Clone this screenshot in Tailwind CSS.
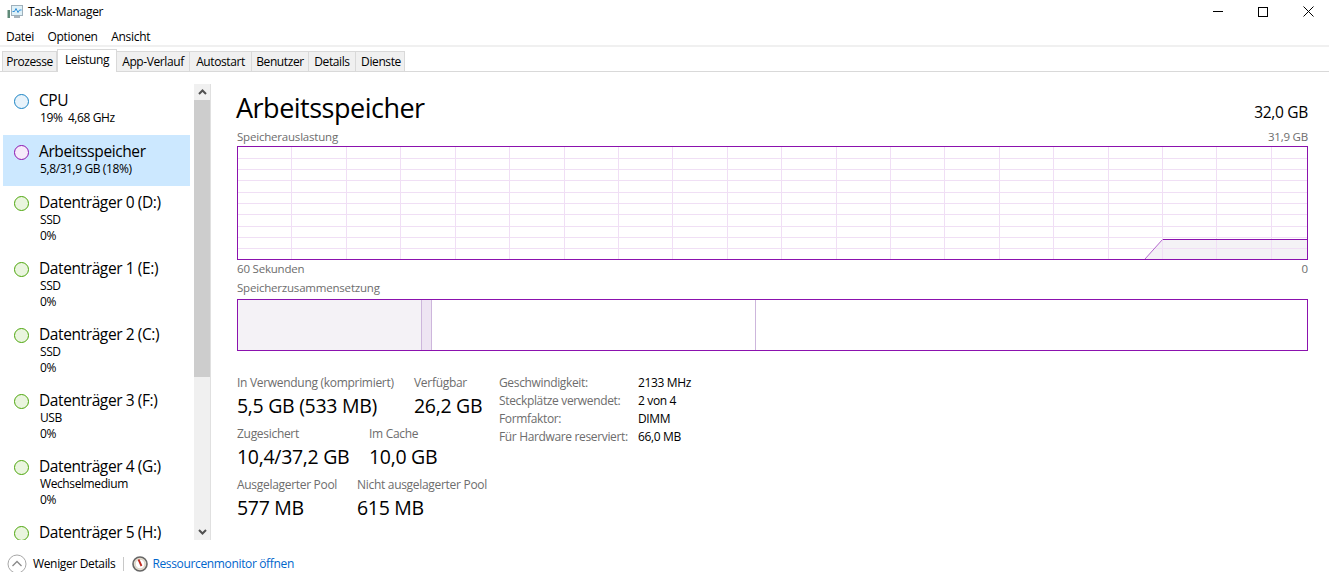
<!DOCTYPE html>
<html lang="de">
  <head>
    <meta charset="UTF-8" />
    <title>Task-Manager</title>
    <script src="https://cdn.jsdelivr.net/npm/@tailwindcss/browser@4"></script>
  </head>
  <body class="bg-white text-black font-['Open_Sans',sans-serif] text-[12px] tracking-[-0.3px] h-[572px] w-[1329px] overflow-hidden">
    <!-- title bar -->
    <div class="flex items-center h-[23px] pl-[7px]">
      <svg class="w-4 h-4 mr-[5px]" viewBox="0 0 16 16">
        <rect x="0.5" y="6" width="2.500" height="8" fill="#5f8a78" />
        <rect x="4.500" y="1.500" width="11" height="10" fill="#dff1f8" stroke="#9fb0bb" />
        <path d="M5.500 7.500 L7.500 7.500 L9 4.500 L11 8.500 L12.500 6 L14.500 6" fill="none" stroke="#2f8fd8" />
        <rect x="7" y="12" width="6" height="2" fill="#a9b4bb" />
      </svg>
      <span>Task-Manager</span>
      <div class="ml-auto flex items-center pr-[15px] gap-[35px]">
        <div class="w-[10px] h-px bg-black"></div>
        <div class="w-[10px] h-[10px] border border-black"></div>
        <svg class="w-[11px] h-[11px]" viewBox="0 0 11 11"><path d="M0.5 0.5 L10.5 10.5 M10.5 0.5 L0.5 10.5" stroke="#000" /></svg>
      </div>
    </div>
    <!-- menu -->
    <div class="flex items-center gap-[13.5px] h-[24px] pt-[5px] pl-[6px] border-b-2 border-[#f0f0f0]">
      <span>Datei</span><span>Optionen</span><span>Ansicht</span>
    </div>
    <!-- tabs -->
    <div class="flex items-end h-[25px] border-b border-[#d9d9d9] pl-[2px] tracking-[-0.4px]">
      <div class="w-[55px] h-[21px] -mb-px flex items-center justify-center bg-[#f0f0f0] border border-[#d9d9d9]">Prozesse</div>
      <div class="w-[60px] h-[23px] -mb-px flex items-start pt-[1px] justify-center bg-white border border-b-0 border-[#d9d9d9]">Leistung</div>
      <div class="w-[73px] h-[21px] -mb-px flex items-center justify-center bg-[#f0f0f0] border border-l-0 border-[#d9d9d9]">App-Verlauf</div>
      <div class="w-[62px] h-[21px] -mb-px flex items-center justify-center bg-[#f0f0f0] border border-l-0 border-[#d9d9d9]">Autostart</div>
      <div class="w-[57px] h-[21px] -mb-px flex items-center justify-center bg-[#f0f0f0] border border-l-0 border-[#d9d9d9]">Benutzer</div>
      <div class="w-[47px] h-[21px] -mb-px flex items-center justify-center bg-[#f0f0f0] border border-l-0 border-[#d9d9d9]">Details</div>
      <div class="w-[49px] h-[21px] -mb-px flex items-center justify-center bg-[#f0f0f0] border border-l-0 border-[#d9d9d9] pl-[2px]">Dienste</div>
    </div>

    <div class="flex h-[468px]">
      <!-- left list -->
      <div class="flex w-[211px] shrink-0 pt-[12px]">
        <div class="w-[187px] ml-[3px] h-[456px] overflow-hidden shrink-0 tracking-[-0.4px]">
          <div class="h-[51px] flex pl-[11px] pt-[7px]">
            <div class="w-[15px] h-[15px] mt-[3px] rounded-full border border-[#1a83c4] bg-[#e8f3fb]"></div>
            <div class="ml-[10px]">
              <div class="text-[15.5px] leading-[19px]">CPU</div>
              <div class="leading-[16px] pl-px">19%&nbsp; 4,68 GHz</div>
            </div>
          </div>
          <div class="h-[51px] flex pl-[11px] pt-[7px] bg-[#cce8ff]">
            <div class="w-[15px] h-[15px] mt-[3px] rounded-full border border-[#8b12ae] bg-[#f6eafa]"></div>
            <div class="ml-[10px]">
              <div class="text-[15.5px] leading-[19px]">Arbeitsspeicher</div>
              <div class="leading-[16px] pl-px">5,8/31,9 GB (18%)</div>
            </div>
          </div>
          <div class="h-[66px] flex pl-[11px] pt-[7px]">
            <div class="w-[15px] h-[15px] mt-[3px] rounded-full border border-[#4da60c] bg-[#eaf5df]"></div>
            <div class="ml-[10px]">
              <div class="text-[15.5px] leading-[19px]">Datenträger 0 (D:)</div>
              <div class="leading-[16px] pl-px">SSD</div>
              <div class="leading-[16px] pl-px">0%</div>
            </div>
          </div>
          <div class="h-[66px] flex pl-[11px] pt-[7px]">
            <div class="w-[15px] h-[15px] mt-[3px] rounded-full border border-[#4da60c] bg-[#eaf5df]"></div>
            <div class="ml-[10px]">
              <div class="text-[15.5px] leading-[19px]">Datenträger 1 (E:)</div>
              <div class="leading-[16px] pl-px">SSD</div>
              <div class="leading-[16px] pl-px">0%</div>
            </div>
          </div>
          <div class="h-[66px] flex pl-[11px] pt-[7px]">
            <div class="w-[15px] h-[15px] mt-[3px] rounded-full border border-[#4da60c] bg-[#eaf5df]"></div>
            <div class="ml-[10px]">
              <div class="text-[15.5px] leading-[19px]">Datenträger 2 (C:)</div>
              <div class="leading-[16px] pl-px">SSD</div>
              <div class="leading-[16px] pl-px">0%</div>
            </div>
          </div>
          <div class="h-[66px] flex pl-[11px] pt-[7px]">
            <div class="w-[15px] h-[15px] mt-[3px] rounded-full border border-[#4da60c] bg-[#eaf5df]"></div>
            <div class="ml-[10px]">
              <div class="text-[15.5px] leading-[19px]">Datenträger 3 (F:)</div>
              <div class="leading-[16px] pl-px">USB</div>
              <div class="leading-[16px] pl-px">0%</div>
            </div>
          </div>
          <div class="h-[66px] flex pl-[11px] pt-[7px]">
            <div class="w-[15px] h-[15px] mt-[3px] rounded-full border border-[#4da60c] bg-[#eaf5df]"></div>
            <div class="ml-[10px]">
              <div class="text-[15.5px] leading-[19px]">Datenträger 4 (G:)</div>
              <div class="leading-[16px] pl-px">Wechselmedium</div>
              <div class="leading-[16px] pl-px">0%</div>
            </div>
          </div>
          <div class="h-[66px] flex pl-[11px] pt-[7px]">
            <div class="w-[15px] h-[15px] mt-[3px] rounded-full border border-[#4da60c] bg-[#eaf5df]"></div>
            <div class="ml-[10px]">
              <div class="text-[15.5px] leading-[19px]">Datenträger 5 (H:)</div>
            </div>
          </div>
        </div>
        <!-- scrollbar -->
        <div class="w-[17px] ml-[4px] h-[456px] bg-[#f0f0f0] flex flex-col border-r border-[#e0e0e0]">
          <div class="h-[16px] flex items-center justify-center">
            <svg class="w-[9px] h-[6px]" viewBox="0 0 9 6"><path d="M1 5 L4.500 1.500 L8 5" fill="none" stroke="#505050" stroke-width="2" /></svg>
          </div>
          <div class="h-[277px] bg-[#cdcdcd]"></div>
          <div class="flex-1"></div>
          <div class="h-[16px] flex items-center justify-center">
            <svg class="w-[9px] h-[6px]" viewBox="0 0 9 6"><path d="M1 1 L4.500 4.500 L8 1" fill="none" stroke="#505050" stroke-width="2" /></svg>
          </div>
        </div>
      </div>

      <!-- main -->
      <div class="flex-1 pl-[26px] pr-[21px]">
        <div class="flex items-end justify-between h-[50px] pt-[8px]">
          <div class="text-[27px] leading-[34px] -ml-px tracking-[-0.5px] relative top-[3px]">Arbeitsspeicher</div>
          <div class="text-[15.5px] leading-[20px]">32,0 GB</div>
        </div>
        <div class="flex justify-between text-[#6d6d6d] text-[11.5px] tracking-[-0.2px] leading-[16px] mt-[7px]">
          <span>Speicherauslastung</span><span>31,9 GB</span>
        </div>
        <svg class="block mt-[1px] w-[1071px] h-[114px]" viewBox="0 0 1071 114" shape-rendering="crispEdges">
          <path d="M908 113 L925.500 93.500 H1071 V113 Z" fill="#f4f2f6" />
          <g stroke="#f0dff5">
            <path d="M0 12.500H1071M0 23.500H1071M0 34.500H1071M0 46.500H1071M0 57.500H1071M0 68.500H1071M0 80.500H1071M0 91.500H1071M0 102.500H1071" />
            <path d="M54.500 0V114M109.500 0V114M163.500 0V114M218.500 0V114M272.500 0V114M327.500 0V114M381.500 0V114M435.500 0V114M490.500 0V114M544.500 0V114M599.500 0V114M653.500 0V114M707.500 0V114M762.500 0V114M816.500 0V114M871.500 0V114M925.500 0V114M979.500 0V114M1034.500 0V114" />
          </g>
          <path d="M908 113 L925.500 93.500" stroke="#b568cf" fill="none" shape-rendering="auto" />
          <path d="M925.500 93.500 H1071" stroke="#8b12ae" />
          <rect x="0.500" y="0.500" width="1070" height="113" fill="none" stroke="#8b12ae" />
        </svg>
        <div class="flex justify-between text-[#6d6d6d] text-[11.5px] tracking-[-0.2px] leading-[16px] mt-px">
          <span>60 Sekunden</span><span>0</span>
        </div>
        <div class="text-[#6d6d6d] text-[11.5px] tracking-[-0.2px] leading-[16px] mt-[3px]">Speicherzusammensetzung</div>
        <div class="flex mt-[3px] w-[1071px] h-[52px] border border-[#8b12ae]">
          <div class="w-[184px] bg-[#f4f2f6] border-r border-[#cdb6dc]"></div>
          <div class="w-[10px] bg-[#eee5f3] border-r border-[#cdb6dc]"></div>
          <div class="w-[324px] border-r border-[#cdb6dc]"></div>
        </div>

        <!-- stats -->
        <div class="flex mt-[24px]">
          <div class="w-[262px] shrink-0">
            <div class="flex h-[51px]">
              <div class="w-[177px]">
                <div class="text-[#6d6d6d] leading-[16px]">In Verwendung (komprimiert)</div>
                <div class="text-[19.5px] leading-[29px]">5,5 GB (533 MB)</div>
              </div>
              <div>
                <div class="text-[#6d6d6d] leading-[16px]">Verfügbar</div>
                <div class="text-[19.5px] leading-[29px]">26,2 GB</div>
              </div>
            </div>
            <div class="flex h-[51px]">
              <div class="w-[132px]">
                <div class="text-[#6d6d6d] leading-[16px]">Zugesichert</div>
                <div class="text-[19.5px] leading-[29px]">10,4/37,2 GB</div>
              </div>
              <div>
                <div class="text-[#6d6d6d] leading-[16px]">Im Cache</div>
                <div class="text-[19.5px] leading-[29px]">10,0 GB</div>
              </div>
            </div>
            <div class="flex h-[51px]">
              <div class="w-[120px]">
                <div class="text-[#6d6d6d] leading-[16px]">Ausgelagerter Pool</div>
                <div class="text-[19.5px] leading-[29px]">577 MB</div>
              </div>
              <div>
                <div class="text-[#6d6d6d] leading-[16px]">Nicht ausgelagerter Pool</div>
                <div class="text-[19.5px] leading-[29px]">615 MB</div>
              </div>
            </div>
          </div>
          <div class="grid grid-cols-[139px_auto] auto-rows-[18px] items-center leading-[16px] h-max -mt-px tracking-[-0.35px]">
            <span class="text-[#6d6d6d]">Geschwindigkeit:</span><span>2133 MHz</span>
            <span class="text-[#6d6d6d]">Steckplätze verwendet:</span><span>2 von 4</span>
            <span class="text-[#6d6d6d]">Formfaktor:</span><span>DIMM</span>
            <span class="text-[#6d6d6d]">Für Hardware reserviert:</span><span>66,0 MB</span>
          </div>
        </div>
      </div>
    </div>

    <!-- footer -->
    <div class="flex items-center h-[32px] pt-[16px] pl-[7px]">
      <svg class="w-[20px] h-[20px] shrink-0" viewBox="0 0 20 20">
        <circle cx="10" cy="10" r="9" fill="#fff" stroke="#a8a8a8" />
        <path d="M5.500 12 L10 7.500 L14.500 12" fill="none" stroke="#8a8a8a" stroke-width="1.300" />
      </svg>
      <span class="ml-[6px] tracking-[-0.35px]">Weniger Details</span>
      <div class="w-px h-[14px] bg-[#c8c8c8] mx-[8px]"></div>
      <svg class="w-[16px] h-[16px] shrink-0" viewBox="0 0 16 16">
        <circle cx="8" cy="8" r="7" fill="#e6dfd0" stroke="#666" stroke-width="1.600" />
        <circle cx="8" cy="8" r="4.800" fill="#fff" stroke="#c8c0b0" stroke-width="0.600" />
        <path d="M6.500 3.500 L9.500 10" stroke="#c0281c" stroke-width="1.800" />
      </svg>
      <span class="ml-[4px] text-[#0066cc] tracking-[-0.35px]">Ressourcenmonitor öffnen</span>
    </div>
  </body>
</html>
